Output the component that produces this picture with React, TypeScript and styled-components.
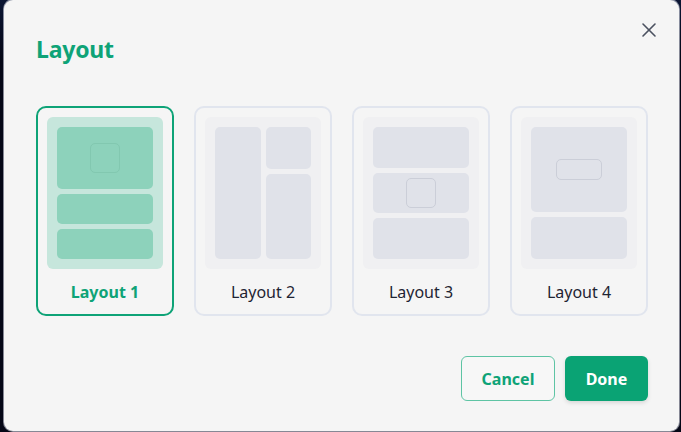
import React, { useState } from "react";
import styled, { createGlobalStyle, css } from "styled-components";
import { X } from "lucide-react";

const GlobalStyle = createGlobalStyle`
  html, body {
    margin: 0;
    padding: 0;
    background: #060a1c;
  }
  body {
    font-family: "Noto Sans", "Open Sans", sans-serif;
  }
`;

const GREEN = "#0ea377";

const Backdrop = styled.div`
  width: 681px;
  height: 432px;
  box-sizing: border-box;
  padding: 0 2px 1px 4px;
  background: linear-gradient(180deg, #0b1634 0%, #050716 14%, #050716 100%);
  display: flex;
`;

const Dialog = styled.div`
  position: relative;
  flex: 1;
  box-sizing: border-box;
  background: #f5f5f5;
  border-radius: 9px;
  padding: 33px 31px 30px 32px;
  display: flex;
  flex-direction: column;
  box-shadow: 0 0 0 1px rgba(220, 224, 235, 0.6);
`;

const Title = styled.h2`
  margin: 0;
  font-size: 23px;
  line-height: 32px;
  font-weight: 700;
  color: ${GREEN};
  letter-spacing: -0.2px;
`;

const CloseButton = styled.button`
  position: absolute;
  top: 18px;
  right: 18px;
  width: 24px;
  height: 24px;
  padding: 0;
  border: none;
  background: transparent;
  color: #4b5160;
  display: flex;
  align-items: center;
  justify-content: center;
  cursor: pointer;
`;

const CardRow = styled.div`
  margin-top: 41px;
  display: grid;
  grid-template-columns: repeat(4, 138px);
  column-gap: 20px;
`;

const Card = styled.button<{ $selected: boolean }>`
  height: 210px;
  box-sizing: border-box;
  padding: 9px 9px 0;
  border-radius: 10px;
  border: 2px solid ${(p) => (p.$selected ? GREEN : "#e1e5ee")};
  background: #f5f5f5;
  display: flex;
  flex-direction: column;
  cursor: pointer;
  font-family: inherit;
`;

const Preview = styled.div<{ $selected: boolean }>`
  height: 152px;
  box-sizing: border-box;
  padding: 10px;
  border-radius: 6px;
  background: ${(p) => (p.$selected ? "#c6e6dc" : "#f0f0f2")};
  display: grid;
  gap: 5px;
`;

const Block = styled.div<{ $selected: boolean }>`
  border-radius: 5px;
  background: ${(p) => (p.$selected ? "#8dd2bb" : "#e0e2e9")};
  display: flex;
  align-items: center;
  justify-content: center;
  min-height: 0;
`;

const Inset = styled.div<{ $selected: boolean; $wide?: boolean }>`
  box-sizing: border-box;
  border-radius: 5px;
  border: 1px solid ${(p) => (p.$selected ? "#82c8b0" : "#cbced8")};
  ${(p) =>
    p.$wide
      ? css`
          width: 46px;
          height: 21px;
        `
      : css`
          width: 30px;
          height: 30px;
        `}
`;

const Column = styled.div`
  display: grid;
  grid-template-rows: 42fr 85fr;
  gap: 5px;
`;

const Label = styled.span<{ $selected: boolean }>`
  flex: 1;
  display: flex;
  align-items: center;
  justify-content: center;
  padding-top: 1px;
  font-size: 16px;
  font-weight: ${(p) => (p.$selected ? 700 : 400)};
  color: ${(p) => (p.$selected ? GREEN : "#1f2433")};
`;

const Footer = styled.div`
  margin-top: auto;
  display: flex;
  justify-content: flex-end;
  gap: 10px;
`;

const BaseButton = styled.button`
  height: 45px;
  box-sizing: border-box;
  border-radius: 6px;
  font-family: inherit;
  font-size: 16px;
  font-weight: 700;
  cursor: pointer;
`;

const CancelButton = styled(BaseButton)`
  width: 94px;
  border: 1px solid #5ec4a4;
  background: #f7f7f7;
  color: ${GREEN};
`;

const DoneButton = styled(BaseButton)`
  width: 83px;
  border: none;
  background: #0aa374;
  color: #ffffff;
  box-shadow: 0 2px 4px rgba(0, 0, 0, 0.12);
`;

type LayoutId = 1 | 2 | 3 | 4;

function LayoutPreview({ id, selected }: { id: LayoutId; selected: boolean }) {
  if (id === 1) {
    return (
      <Preview $selected={selected} style={{ gridTemplateRows: "61fr 30fr 30fr" }}>
        <Block $selected={selected}>
          <Inset $selected={selected} />
        </Block>
        <Block $selected={selected} />
        <Block $selected={selected} />
      </Preview>
    );
  }
  if (id === 2) {
    return (
      <Preview $selected={selected} style={{ gridTemplateColumns: "1fr 1fr" }}>
        <Block $selected={selected} />
        <Column>
          <Block $selected={selected} />
          <Block $selected={selected} />
        </Column>
      </Preview>
    );
  }
  if (id === 3) {
    return (
      <Preview $selected={selected} style={{ gridTemplateRows: "1fr 1fr 1fr" }}>
        <Block $selected={selected} />
        <Block $selected={selected}>
          <Inset $selected={selected} />
        </Block>
        <Block $selected={selected} />
      </Preview>
    );
  }
  return (
    <Preview $selected={selected} style={{ gridTemplateRows: "85fr 42fr" }}>
      <Block $selected={selected}>
        <Inset $selected={selected} $wide />
      </Block>
      <Block $selected={selected} />
    </Preview>
  );
}

export default function App() {
  const [selected, setSelected] = useState<LayoutId>(1);
  const layouts: LayoutId[] = [1, 2, 3, 4];

  return (
    <>
      <GlobalStyle />
      <Backdrop>
        <Dialog role="dialog" aria-label="Layout">
          <Title>Layout</Title>
          <CloseButton aria-label="Close">
            <X size={24} strokeWidth={1.6} />
          </CloseButton>
          <CardRow>
            {layouts.map((id) => (
              <Card key={id} $selected={selected === id} onClick={() => setSelected(id)}>
                <LayoutPreview id={id} selected={selected === id} />
                <Label $selected={selected === id}>Layout {id}</Label>
              </Card>
            ))}
          </CardRow>
          <Footer>
            <CancelButton>Cancel</CancelButton>
            <DoneButton>Done</DoneButton>
          </Footer>
        </Dialog>
      </Backdrop>
    </>
  );
}
